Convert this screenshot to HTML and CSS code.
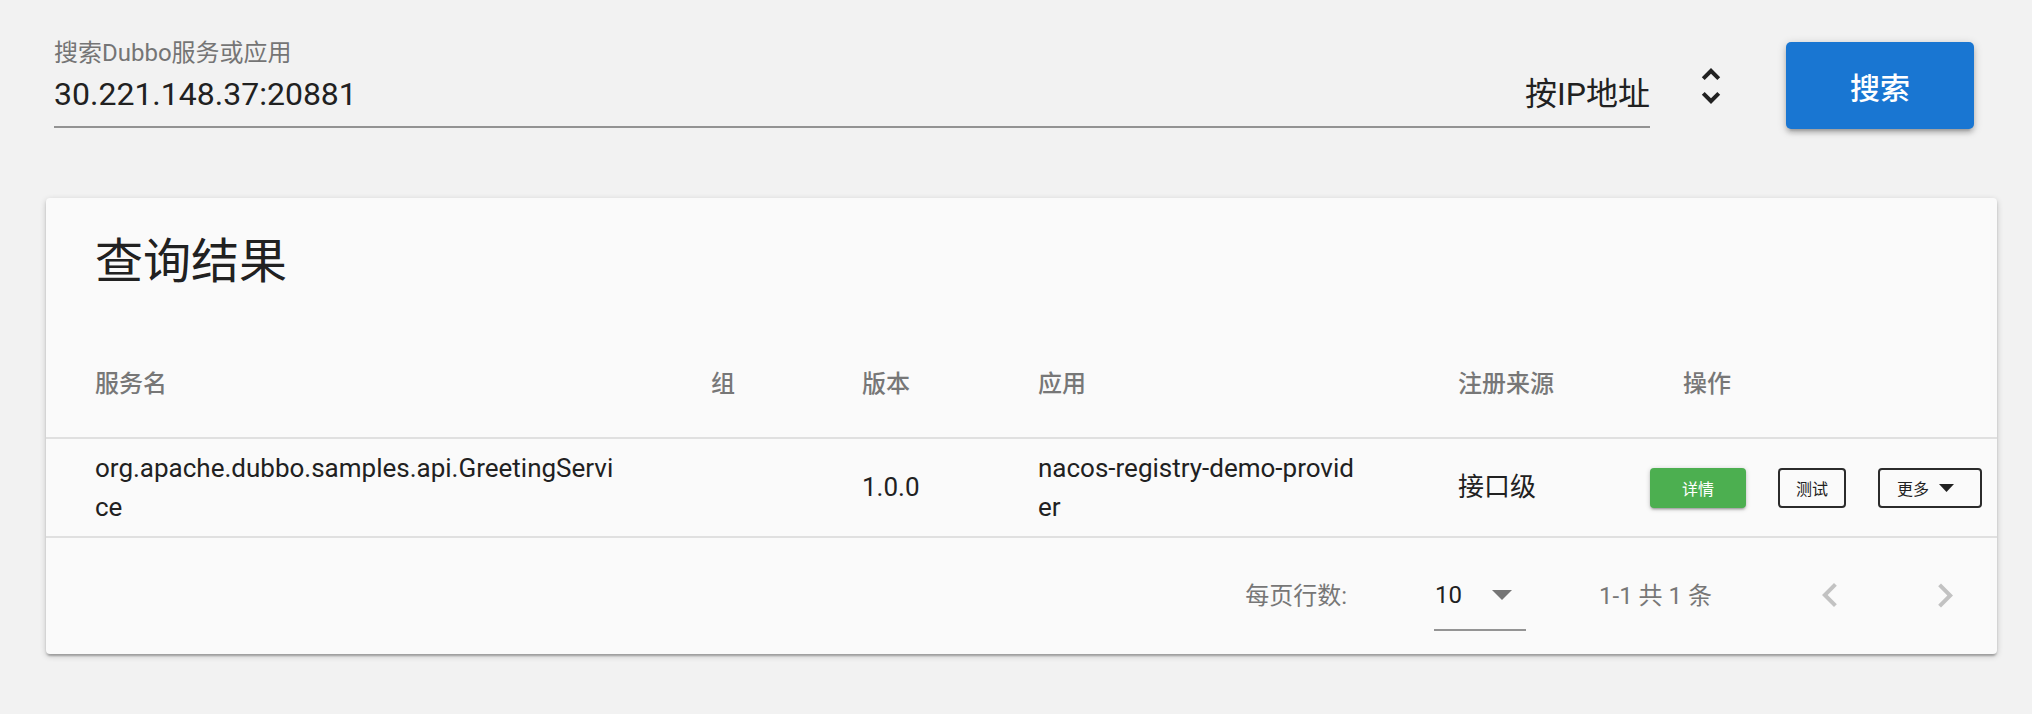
FILE: index.html
```html
<!DOCTYPE html>
<html lang="zh-CN">
<head>
<meta charset="utf-8">
<title>Dubbo 服务查询</title>
<link rel="stylesheet" href="styles.css">
</head>
<body>
<div class="top">
  <div class="field">
    <div class="field-label">搜索Dubbo服务或应用</div>
    <div class="field-row">
      <span class="field-value">30.221.148.37:20881</span>
      <span class="field-select">按IP地址</span>
    </div>
  </div>
  <svg class="unfold" viewBox="0 0 24 24" width="48" height="48"><path d="M12 5.83L15.17 9l1.41-1.41L12 3 7.41 7.59 8.83 9 12 5.83zm0 12.34L8.83 15l-1.41 1.41L12 21l4.59-4.59L15.17 15 12 18.17z"/></svg>
  <button class="search-btn">搜索</button>
</div>

<div class="card">
  <div class="toolbar"><h2 class="title">查询结果</h2></div>
  <div class="row head">
    <div class="cell">服务名</div>
    <div class="cell">组</div>
    <div class="cell">版本</div>
    <div class="cell">应用</div>
    <div class="cell">注册来源</div>
    <div class="cell ops-head">操作</div>
  </div>
  <div class="row body">
    <div class="cell"><span class="wrap w-service">org.apache.dubbo.samples.api.GreetingService</span></div>
    <div class="cell"></div>
    <div class="cell">1.0.0</div>
    <div class="cell"><span class="wrap w-app">nacos-registry-demo-provider</span></div>
    <div class="cell">接口级</div>
    <div class="cell ops">
      <button class="btn btn-green">详情</button>
      <button class="btn btn-outline btn-test">测试</button>
      <button class="btn btn-outline btn-more">更多<svg class="more-caret" viewBox="0 0 15 8" width="15" height="8"><path d="M0 0h15L7.5 8z"/></svg></button>
    </div>
  </div>
  <div class="pager">
    <span class="caption">每页行数:</span>
    <div class="select">
      <span class="select-value">10</span>
      <svg class="select-caret" viewBox="0 0 20 10" width="20" height="10"><path d="M0 0h20L10 10z"/></svg>
    </div>
    <span class="caption count">1-1 共 1 条</span>
    <svg class="page-icon prev" viewBox="0 0 24 24" width="48" height="48"><path d="M15.41 16.09l-4.58-4.59 4.58-4.59L14 5.5l-6 6 6 6z"/></svg>
    <svg class="page-icon next" viewBox="0 0 24 24" width="48" height="48"><path d="M8.59 16.34l4.58-4.59-4.58-4.59L10 5.75l6 6-6 6z"/></svg>
  </div>
</div>
</body>
</html>
```

FILE: styles.css
```css
html, body {
  margin: 0;
  padding: 0;
}
body {
  background: #f2f2f2;
  font-family: "Roboto", "Noto Sans CJK SC", sans-serif;
  color: #212121;
  width: 2032px;
  height: 714px;
  overflow: hidden;
}

/* ---------- search bar ---------- */
.top {
  display: flex;
  align-items: flex-start;
  height: 198px;
  box-sizing: border-box;
  padding-left: 54px;
  padding-right: 58px;
}
.field {
  flex: 1;
  padding-top: 39px;
  border-bottom: 2px solid #939393;
  height: 87px;
}
.field-label {
  font-size: 24px;
  line-height: 28px;
  color: #757575;
}
.field-row {
  display: flex;
  justify-content: space-between;
  margin-top: 7px;
  height: 40px;
  line-height: 40px;
  font-size: 32px;
  color: #212121;
}
.unfold {
  margin-left: 37px;
  margin-top: 62px;
  fill: #212121;
  flex: none;
}
.search-btn {
  flex: none;
  margin-left: 51px;
  margin-top: 42px;
  width: 188px;
  height: 87px;
  border: none;
  border-radius: 5px;
  background: #1976d2;
  color: #fff;
  font-family: inherit;
  font-size: 30px;
  font-weight: 500;
  box-shadow: 0 2px 10px rgba(0,0,0,0.2), 0 4px 4px rgba(0,0,0,0.14), 0 6px 2px -4px rgba(0,0,0,0.12);
}

/* ---------- card ---------- */
.card {
  margin-left: 46px;
  margin-right: 35px;
  background: #fafafa;
  border-radius: 4px;
  box-shadow: 0 2px 6px rgba(0,0,0,0.2), 0 2px 2px rgba(0,0,0,0.14), 0 4px 2px -2px rgba(0,0,0,0.12);
  height: 456px;
}
.toolbar {
  height: 128px;
  display: flex;
  align-items: center;
  padding-left: 49px;
}
.title {
  margin: 0;
  font-size: 48px;
  line-height: 56px;
  font-weight: 400;
  color: #212121;
}
.row {
  display: grid;
  grid-template-columns: 616px 151px 176px 420px 192px 1fr;
  padding-left: 49px;
  border-bottom: 2px solid #e0e0e0;
  align-items: center;
}
.head {
  height: 111px;
  font-size: 24px;
  font-weight: 500;
  color: #777;
}
.ops-head {
  padding-left: 33px;
}
.body {
  height: 97px;
  font-size: 26px;
  line-height: 39px;
  color: #212121;
}
.wrap {
  display: block;
  word-break: break-all;
}
.w-service { width: 526px; }
.w-app { width: 322px; }

.ops {
  display: flex;
  align-items: center;
  gap: 32px;
}
.btn {
  height: 40px;
  box-sizing: border-box;
  border-radius: 4px;
  font-family: inherit;
  font-size: 16px;
  padding: 0;
  display: flex;
  align-items: center;
  justify-content: center;
}
.btn-green {
  width: 96px;
  background: #4caf50;
  color: #fff;
  border: none;
  box-shadow: 0 1px 5px rgba(0,0,0,0.2), 0 2px 2px rgba(0,0,0,0.14), 0 3px 1px -2px rgba(0,0,0,0.12);
}
.btn-outline {
  background: transparent;
  border: 2px solid #2b2b2b;
  color: #212121;
}
.btn-test { width: 68px; }
.btn-more {
  width: 104px;
  justify-content: flex-start;
  padding-left: 17px;
}
.more-caret {
  margin-left: 10px;
  fill: #212121;
}

/* ---------- pagination ---------- */
.pager {
  height: 116px;
  display: flex;
  align-items: center;
  justify-content: flex-end;
  padding-right: 28px;
}
.caption {
  font-size: 24px;
  line-height: 28px;
  color: #777;
}
.select {
  margin-left: 87px;
  width: 92px;
  height: 64px;
  margin-top: 3px;
  box-sizing: content-box;
  border-bottom: 2px solid #949494;
  display: flex;
  align-items: center;
}
.select-value {
  font-size: 24px;
  line-height: 28px;
  color: #212121;
  margin-top: -3px;
  margin-left: 1px;
}
.select-caret {
  margin-left: auto;
  margin-right: 14px;
  margin-top: -3px;
  fill: #757575;
}
.count {
  margin-left: 73px;
}
.page-icon {
  fill: #c2c2c2;
  flex: none;
}
.prev { margin-left: 94px; }
.next { margin-left: 67px; }
```
